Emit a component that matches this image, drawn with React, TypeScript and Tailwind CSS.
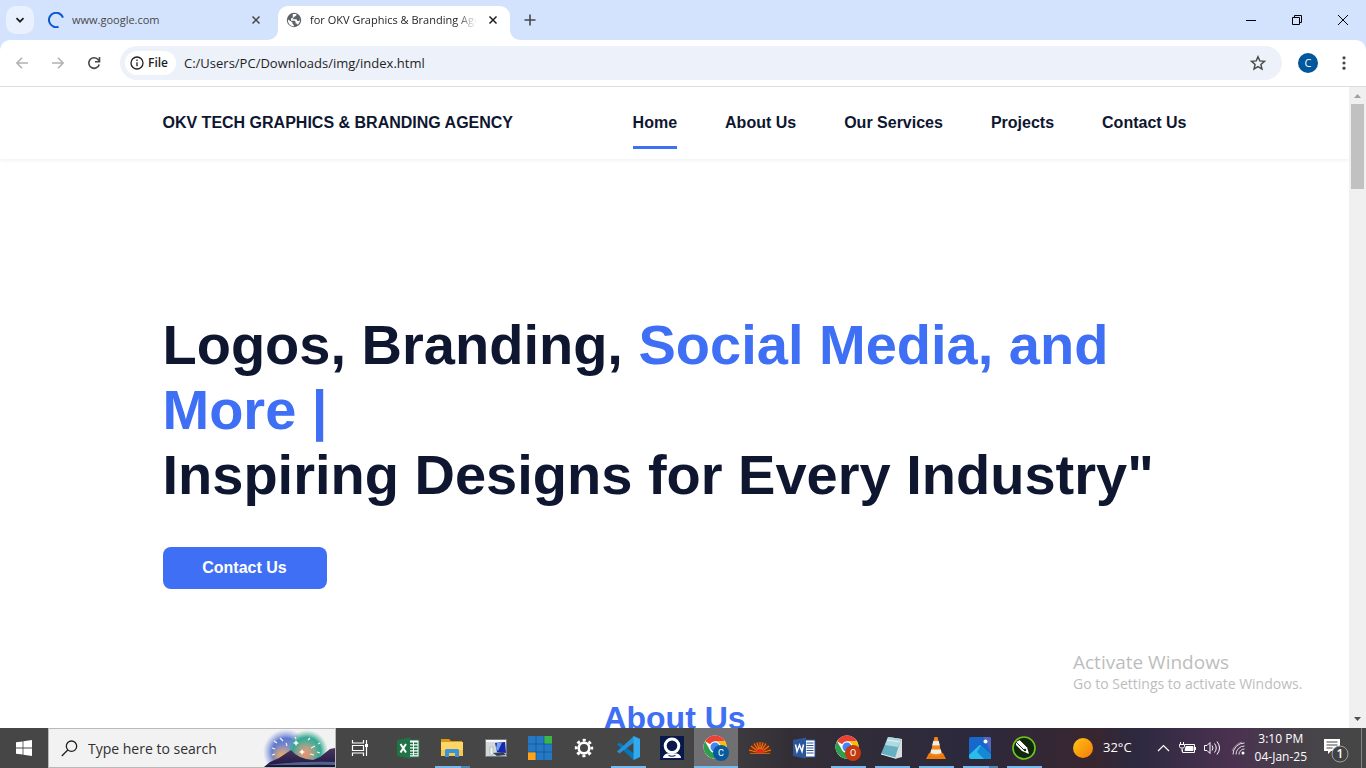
import type { ReactNode } from "react";

const ui = "font-['Open_Sans','Noto_Sans',sans-serif]";

function Cross({ className }: { className?: string }) {
  return (
    <svg viewBox="0 0 10 10" className={className} fill="none" stroke="currentColor">
      <path d="M1.500 1.500l7 7M8.500 1.500l-7 7" strokeWidth="1.500" />
    </svg>
  );
}

function TabStrip() {
  return (
    <div className={`flex h-10 shrink-0 items-stretch bg-[#d3e3fd] ${ui} text-[11px] text-[#474747]`}>
      <button
        aria-label="Search tabs"
        className="mt-1.5 ml-1.5 flex h-7 w-7 items-center justify-center rounded-[10px] bg-[#e9f1fe]"
      >
        <svg viewBox="0 0 10 10" className="h-2.5 w-2.5" fill="none" stroke="#1f1f1f" strokeWidth="1.800">
          <path d="M1.500 3.200L5 6.700l3.500-3.500" />
        </svg>
      </button>
      <div className="flex w-[240px] items-center pl-3.5">
        <svg viewBox="0 0 16 16" className="h-4 w-4" fill="none" stroke="#0b57d0" strokeWidth="2">
          <path d="M15 5.600A7.200 7.200 0 1 0 10.500 14.800" />
        </svg>
        <span className="ml-2 flex-1 pt-px">www.google.com</span>
        <button aria-label="Close www.google.com" className="mr-2.5 flex h-4 w-4 items-center justify-center">
          <Cross className="h-2.5 w-2.5" />
        </button>
      </div>
      <svg viewBox="0 0 10 10" className="-ml-1.5 h-2.5 w-2.5 self-end" fill="#fff">
        <path d="M10 0v10H0A10 10 0 0 0 10 0z" />
      </svg>
      <div className="mt-1.5 flex w-[232px] items-center rounded-t-[10px] bg-white pb-1.5 pl-2 text-[#1f1f1f]">
        <svg viewBox="0 0 16 16" className="h-4 w-4">
          <circle cx="8" cy="8" r="7.200" fill="#5f6368" />
          <path
            d="M2 7.500l4.500 3v1.200l1.300 1.200v1.600A6 6 0 0 1 2 7.500zM6.800 1.900h3.600v1.400L9 4.600 7.500 5v1.300L6 7.300h4.500l1 1.600h1.700l.8-1.600c.3 2.500-1 4.500-2.500 5.500l-.7-1.300H9.600V9.700L8.600 8.700H5V6.400l1.800-.6z"
            fill="#fff"
          />
        </svg>
        <span className="ml-2 w-[167px] overflow-hidden pt-px whitespace-nowrap [mask-image:linear-gradient(to_right,black_145px,transparent)]">
          for OKV Graphics &amp; Branding Agency
        </span>
        <button aria-label="Close current tab" className="ml-2 flex h-4 w-4 items-center justify-center">
          <Cross className="h-2.5 w-2.5" />
        </button>
      </div>
      <svg viewBox="0 0 10 10" className="h-2.5 w-2.5 self-end" fill="#fff">
        <path d="M0 0v10h10A10 10 0 0 1 0 0z" />
      </svg>
      <button aria-label="New tab" className="flex w-5 items-center justify-center">
        <svg viewBox="0 0 12 12" className="h-3 w-3" fill="none" stroke="currentColor" strokeWidth="1.600">
          <path d="M6 .5v11M.5 6h11" />
        </svg>
      </button>
      <div className="flex-1" />
      <button aria-label="Minimize" className="flex w-[46px] items-center justify-center">
        <svg viewBox="0 0 10 10" className="h-2.5 w-2.5" stroke="#000">
          <path d="M0 5.500h10" />
        </svg>
      </button>
      <button aria-label="Restore" className="flex w-[46px] items-center justify-center">
        <svg viewBox="0 0 10 10" className="h-2.5 w-2.5" fill="none" stroke="#000">
          <path d="M.5 2.500h7v7h-7zM2.500 2.500v-2h7v7h-2" />
        </svg>
      </button>
      <button aria-label="Close" className="flex w-[46px] items-center justify-center">
        <svg viewBox="0 0 10 10" className="h-2.5 w-2.5" stroke="#000">
          <path d="M0 0l10 10M10 0L0 10" />
        </svg>
      </button>
    </div>
  );
}

function Toolbar() {
  return (
    <div className="shrink-0 bg-[#d3e3fd]">
      <div
        className={`flex h-[47px] items-center rounded-t-[10px] border-b border-[#dcdfe2] bg-white ${ui} text-[13px] text-[#1f1f1f]`}
      >
        <button aria-label="Back" className="ml-3.5 flex h-4 w-4 items-center justify-center text-[#b0b1b3]">
          <svg viewBox="0 0 12 12" className="h-3 w-3" fill="none" stroke="currentColor" strokeWidth="1.500">
            <path d="M12 6H1M6 .8L.9 6 6 11.200" />
          </svg>
        </button>
        <button aria-label="Forward" className="ml-5 flex h-4 w-4 items-center justify-center text-[#b0b1b3]">
          <svg viewBox="0 0 12 12" className="h-3 w-3" fill="none" stroke="currentColor" strokeWidth="1.500">
            <path d="M0 6h11M6 .8L11.100 6 6 11.200" />
          </svg>
        </button>
        <button aria-label="Reload" className="ml-5 flex h-4 w-4 items-center justify-center text-[#474747]">
          <svg viewBox="0 0 14 14" className="h-3.5 w-3.5" fill="none" stroke="currentColor" strokeWidth="1.600">
            <path d="M12.200 8.500A5.300 5.300 0 1 1 10.800 3.200L12.500 5" />
            <path d="M12.500 1v4.700H8" />
          </svg>
        </button>
        <div className="ml-[18px] flex h-[34px] flex-1 items-center rounded-full bg-[#edf1fa] pr-4 pl-[5px]">
          <button className="flex h-6 w-[51px] items-center rounded-full bg-white pl-[5px] text-xs font-semibold">
            <svg viewBox="0 0 14 14" className="mr-1 h-3.5 w-3.5" fill="none" stroke="currentColor" strokeWidth="1.300">
              <circle cx="7" cy="7" r="6" />
              <path d="M7 6.200v4M7 3.600v1.400" />
            </svg>
            File
          </button>
          <input
            aria-label="Address"
            defaultValue="C:/Users/PC/Downloads/img/index.html"
            className="ml-2 min-w-0 flex-1 bg-transparent pt-px outline-none"
          />
          <button aria-label="Bookmark this tab">
            <svg viewBox="0 0 16 16" className="h-4 w-4" fill="none" stroke="#474747" strokeWidth="1.400">
              <path d="M8 1.700l1.800 4.200 4.700.4-3.600 3.100 1.100 4.600L8 11.600 4 14l1.100-4.600L1.500 6.300l4.700-.4z" />
            </svg>
          </button>
        </div>
        <button
          aria-label="Profile C"
          className="ml-4 h-5 w-5 rounded-full bg-[#01579b] text-center text-[11px] leading-5 text-white"
        >
          C
        </button>
        <button aria-label="Menu" className="mr-[14px] ml-[18px] flex h-4 w-4 items-center justify-center">
          <svg viewBox="0 0 4 14" className="h-3.5 w-1" fill="#474747">
            <circle cx="2" cy="1.800" r="1.600" />
            <circle cx="2" cy="7" r="1.600" />
            <circle cx="2" cy="12.200" r="1.600" />
          </svg>
        </button>
      </div>
    </div>
  );
}

const links = ["Home", "About Us", "Our Services", "Projects", "Contact Us"];

function Site() {
  return (
    <div className="flex min-h-0 flex-1 bg-white">
      <main className="relative min-w-0 flex-1 overflow-hidden font-['Liberation_Sans',Arial,sans-serif] font-bold text-[#0e1630]">
        <header className="h-[72px] shadow-[0_1px_4px_rgba(20,26,45,0.08)]">
          <div className="mx-auto flex h-full w-[1024px] max-w-full items-center justify-between">
            <a href="#home">OKV TECH GRAPHICS &amp; BRANDING AGENCY</a>
            <nav className="flex h-full gap-12">
              {links.map((label, i) => (
                <a key={label} href="#" className="flex h-full flex-col">
                  <span className="flex h-[59px] items-end pb-[11px]">{label}</span>
                  {i === 0 && <span className="h-[3px] bg-[#3e6ff4]" />}
                </a>
              ))}
            </nav>
          </div>
        </header>
        <section className="mx-auto w-[1024px] max-w-full pt-[153px]">
          <h1 className="text-[56px] leading-[65px]">
            Logos, Branding, <span className="text-[#3e6ff4]">Social Media, and More |</span>
            <br />
            Inspiring Designs for Every Industry"
          </h1>
          <button className="mt-10 h-[42px] w-[164px] rounded-lg bg-[#3e6ff4] text-white">Contact Us</button>
        </section>
        <h2 className="mt-[111px] text-center text-[32px] leading-[37px] text-[#3e6ff4]">About Us</h2>
        <div className={`absolute right-10 bottom-[34px] w-[236px] ${ui} font-normal text-[#bdbdbd]`}>
          <p className="text-[19px] leading-6">Activate Windows</p>
          <p className="text-sm leading-5">Go to Settings to activate Windows.</p>
        </div>
      </main>
      <div className="flex w-[17px] flex-col items-center bg-[#f0f0f0]">
        <svg viewBox="0 0 17 17" className="h-[17px] w-[17px]" fill="#a0a0a0">
          <path d="M5 11h7L8.500 7z" />
        </svg>
        <div className="h-[85px] w-[13px] bg-[#c1c1c1]" />
        <div className="flex-1" />
        <svg viewBox="0 0 17 17" className="h-[17px] w-[17px]" fill="#505050">
          <path d="M5 6h7l-3.500 4z" />
        </svg>
      </div>
    </div>
  );
}

function Chrome({ letter, badge }: { letter: string; badge: string }) {
  return (
    <svg viewBox="0 0 26 26" className="h-[26px] w-[26px]">
      <circle cx="12" cy="12" r="11.500" fill="#fff" />
      <path d="M12 12L2 6.300A11.500 11.500 0 0 1 22 6.300H12z" fill="#ea4335" />
      <path d="M12 6.300h10A11.500 11.500 0 0 1 12 23.500l5-8.600z" fill="#fbbc04" />
      <path d="M2 6.300l5 8.600a5.700 5.700 0 0 0 7.800 2.200L12 23.500A11.500 11.500 0 0 1 2 6.300z" fill="#2f9e4b" />
      <circle cx="12" cy="12" r="5.700" fill="#fff" />
      <circle cx="12" cy="12" r="4.500" fill="#4285f4" />
      <circle cx="18" cy="18" r="8" fill={badge} />
      <text x="18" y="21" textAnchor="middle" fontSize="9" fill="#fff" fontFamily="Roboto, sans-serif">
        {letter}
      </text>
    </svg>
  );
}

const icon = "h-6 w-6";

const apps: { name: string; art: ReactNode; line?: string; more?: boolean; active?: boolean }[] = [
  {
    name: "Excel",
    art: (
      <svg viewBox="0 0 24 24" className={icon}>
        <path d="M12 4h11v17H12z" fill="#fff" stroke="#1f7446" />
        <path d="M14 6.500h3v1.800h-3zm4 0h3.500v1.800H18zM14 9.500h3v1.800h-3zm4 0h3.500v1.800H18zm-4 3h3v1.800h-3zm4 0h3.500v1.800H18zm-4 3h3v1.800h-3zm4 0h3.500v1.800H18zM14 18.300h3v1h-3zm4 0h3.500v1H18z" fill="#1f7446" />
        <path d="M1 4l13-2.500v21L1 20z" fill="#1f7446" />
        <path d="M4.500 8l5.500 8.500M10 8l-5.500 8.500" stroke="#fff" strokeWidth="2" />
      </svg>
    ),
  },
  {
    name: "File Explorer",
    line: "w-[26px]",
    more: true,
    art: (
      <svg viewBox="0 0 24 24" className={icon}>
        <path d="M1 3h8l2 2h11v6H1z" fill="#d99b13" />
        <path d="M1 6h22v14H1z" fill="#ffd666" />
        <path d="M1 14h22v6H1z" fill="#f8c74b" />
        <path d="M5 21v-7l1-1h12l1 1v7h-4v-4H9v4z" fill="#3a94dc" />
      </svg>
    ),
  },
  {
    name: "Remote PC",
    art: (
      <svg viewBox="0 0 24 24" className={icon}>
        <path d="M1.500 3.500h21v17h-21z" fill="#d5d8d9" stroke="#777b80" />
        <path d="M2 4h20v2H2z" fill="#f8f9fa" />
        <path d="M6 11h3v8H6z" fill="#e9f5e6" stroke="#8d9aa5" strokeWidth=".5" />
        <path d="M11 7l10-1 1 11-9-1z" fill="#1428b0" />
        <path d="M13 7l5-.5L14 15l-2-2z" fill="#7ba3ec" />
        <path d="M9 17l10-1 3 3-9 1z" fill="#333e5e" />
      </svg>
    ),
  },
  {
    name: "Tiles",
    art: (
      <svg viewBox="0 0 24 24" className={icon}>
        <path d="M0 0h24v24H0z" fill="#2478c4" />
        <path d="M16 0h8v8h-8z" fill="#3db54a" />
        <path d="M0 16h8v8H0z" fill="#ffa31a" />
        <path d="M8 0v24M16 0v24M0 8h24M0 16h24" stroke="#17548c" strokeWidth=".7" />
      </svg>
    ),
  },
  {
    name: "Settings",
    art: (
      <svg viewBox="0 0 24 24" className={icon} fill="none" stroke="#fff">
        <circle cx="12" cy="12" r="5.300" strokeWidth="2.600" />
        <circle cx="12" cy="12" r="7.800" strokeWidth="2.800" strokeDasharray="3.060 3.060" strokeDashoffset="1.530" />
      </svg>
    ),
  },
  {
    name: "Visual Studio Code",
    line: "w-[35px]",
    art: (
      <svg viewBox="0 0 24 24" className={icon}>
        <path d="M17.500 0L24 3v18l-6.500 3L1 8.500 3.500 6.500 18 17.500z" fill="#0877ba" />
        <path d="M17.500 24L1 15.500l2.500 2L18 6.500V0L1 15.500z" fill="#2392d8" />
        <path d="M17.500 0L24 3v18l-6.500 3z" fill="#33a9ee" />
      </svg>
    ),
  },
  {
    name: "Assistant",
    art: (
      <svg viewBox="0 0 24 24" className={icon}>
        <path d="M0 0h24v24H0z" fill="#07194a" />
        <circle cx="12" cy="9.800" r="6.800" fill="none" stroke="#fff" strokeWidth="3" />
        <path d="M3 22q0-3 4-4.500h10q4 1.500 4 4.500z" fill="#fff" />
        <path d="M8.500 19.500q3.500 1.500 7 0" stroke="#07194a" strokeWidth="1.200" fill="none" />
      </svg>
    ),
  },
  { name: "Chrome C", line: "w-full", active: true, art: <Chrome letter="C" badge="#075a9e" /> },
  {
    name: "Fan",
    art: (
      <svg viewBox="0 0 24 24" className={icon}>
        <path d="M1 17A11 11 0 0 1 23 17z" fill="#7a2d0c" />
        <path d="M12 17L1 14M12 17L3 10M12 17L6 7.500M12 17L9 6.500M12 17V6M12 17l3-10.500M12 17l6-9.500M12 17l9-7M12 17l11-3" stroke="#f07818" strokeWidth="1.100" />
        <path d="M8 17a4 4 0 0 1 8 0z" fill="#ed2619" />
        <path d="M2 17.500h20" stroke="#aa6d13" />
      </svg>
    ),
  },
  {
    name: "Word",
    art: (
      <svg viewBox="0 0 24 24" className={icon}>
        <path d="M12 4h11v17H12z" fill="#fff" stroke="#2b579a" />
        <path d="M14.500 7h7m-7 2.500h7m-7 2.500h7m-7 2.500h7m-7 2.500h7" stroke="#2b579a" />
        <path d="M1 4l13-2.500v21L1 20z" fill="#2b579a" />
        <path d="M3.500 8.500l1.500 7 2.500-6.500L10 15.500l1.500-7" fill="none" stroke="#fff" strokeWidth="1.500" />
      </svg>
    ),
  },
  { name: "Chrome O", line: "w-[35px]", art: <Chrome letter="O" badge="#c5390f" /> },
  {
    name: "Notepad",
    line: "w-[35px]",
    art: (
      <svg viewBox="0 0 24 24" className={icon}>
        <path d="M8 1l14 2v18l-7 2z" fill="#d6dede" />
        <path d="M8 1l13 2-6 19L1 18z" fill="#68afc0" />
        <path d="M8 1l13 2-3 8-13-2z" fill="#afdae2" />
        <path d="M7 4l13 2M1 18l14 4" stroke="#def7fa" />
      </svg>
    ),
  },
  {
    name: "VLC",
    line: "w-[35px]",
    art: (
      <svg viewBox="0 0 24 24" className={icon}>
        <path d="M5 17h14l3 6H2z" fill="#ed790b" />
        <path d="M10.500 1h3l4.500 18c-3 1.500-9 1.500-12 0z" fill="#f58612" />
        <path d="M9.300 5h5.400l1.200 4.500H8.100zM7.200 13.500h9.600l.9 3.500c-3 1.500-8.400 1.500-11.400 0z" fill="#ececea" />
      </svg>
    ),
  },
  {
    name: "Photos",
    line: "w-[26px]",
    more: true,
    art: (
      <svg viewBox="0 0 24 24" className={icon}>
        <rect x="1" y="1" width="22" height="22" rx="2" fill="#1767cc" />
        <path d="M15 1h6a2 2 0 0 1 2 2v13z" fill="#5267bd" />
        <path d="M1 19L11 9.500q1-1 2 0L23 19v2q0 2-2 2H3q-2 0-2-2z" fill="#2cbceb" />
        <path d="M13 9.500L23 19v2q0 2-2 2h-5l-7-7z" fill="#1689d5" />
        <circle cx="17.500" cy="5.500" r="2" fill="#fff" />
      </svg>
    ),
  },
  {
    name: "CorelDRAW",
    line: "w-[35px]",
    art: (
      <svg viewBox="0 0 24 24" className={icon}>
        <circle cx="12" cy="12" r="11" fill="#10290d" stroke="#75c51c" strokeWidth="1.600" />
        <path d="M4 6l4-2 7 7 2 7-7-3-6-6z" fill="#fff" />
        <path d="M4 6l8 8M8 4l7 7" stroke="#263b23" />
        <circle cx="13" cy="14" r="1.200" fill="#10290d" />
      </svg>
    ),
  },
];

function HighlightArt() {
  return (
    <svg viewBox="0 0 72 38" className="h-[38px] w-[72px]">
      <defs>
        <radialGradient id="dusk">
          <stop offset="0" stopColor="#8a8fd0" />
          <stop offset=".6" stopColor="#5f79d2" />
          <stop offset="1" stopColor="#8d9ce0" stopOpacity="0" />
        </radialGradient>
        <radialGradient id="aurora">
          <stop offset="0" stopColor="#8fb59c" />
          <stop offset=".65" stopColor="#37a996" />
          <stop offset="1" stopColor="#60bd9e" stopOpacity="0" />
        </radialGradient>
        <radialGradient id="glow">
          <stop offset="0" stopColor="#f0b060" />
          <stop offset="1" stopColor="#f0b060" stopOpacity="0" />
        </radialGradient>
        <radialGradient id="ember">
          <stop offset="0" stopColor="#f08f70" />
          <stop offset="1" stopColor="#f08f70" stopOpacity="0" />
        </radialGradient>
        <linearGradient id="slope" x1="0" y1="0" x2="0" y2="1">
          <stop offset="0" stopColor="#4a3560" />
          <stop offset="1" stopColor="#1d1840" />
        </linearGradient>
      </defs>
      <circle cx="23" cy="23" r="23" fill="url(#dusk)" />
      <circle cx="44" cy="22" r="21" fill="url(#aurora)" />
      <circle cx="19" cy="27" r="12" fill="url(#glow)" />
      <circle cx="42" cy="25" r="13" fill="url(#ember)" />
      <path d="M1 38l6-5 9-4 6-4 6-4 4 4 5 3 6 2 7 1 7-3 5-4 5-4 5-1v19z" fill="url(#slope)" />
      <path d="M3 36q34-4 69-3v3z" fill="#51618e" />
      <path d="M1 38q36-3 71-2v2z" fill="#171634" />
      <path d="M12 20l-3-1M14 14l-3-2M20 12l-3-3M24 17l-1-3M33 10l-1-2M45 11l2-2M48 19l4-2M47 25l4 1M55 15l2-1M54 23l3 1M9 26l3-1" stroke="#fff4db" strokeWidth="1.200" />
      <path d="M33 11l1 2 2 1-2 1-1 2-1-2-2-1 2-1zM39 20l1 2 2 1-2 1-1 2-1-2-2-1 2-1z" fill="#fff" />
    </svg>
  );
}

function Taskbar() {
  return (
    <div
      className={`flex h-10 shrink-0 items-stretch bg-[linear-gradient(90deg,#464646_0%,#464646_50%,#332e36_58%,#2c293d_71%,#38262f_80%,#2c293f_83%,#4a3150_90%,#464448_96%,#464646_100%)] ${ui} text-xs text-white`}
    >
      <button aria-label="Start" className="flex w-12 items-center justify-center">
        <svg viewBox="0 0 16 16" className="h-4 w-4" fill="#fff">
          <path d="M0 2.300L6.600 1.400v6.200H0zM7.400 1.300L16 0v7.600H7.400zM0 8.400h6.600v6.200L0 13.700zM7.400 8.400H16V16l-8.600-1.300z" />
        </svg>
      </button>
      <div className="flex w-72 items-center border border-[#b9b9b9] bg-[#f2f2f2] pl-3 text-[#303030]">
        <svg viewBox="0 0 17 17" className="h-[17px] w-[17px] shrink-0" fill="none" stroke="#222" strokeWidth="1.300">
          <circle cx="10.500" cy="6.200" r="5.200" />
          <path d="M6.800 10L.8 16" />
        </svg>
        <input
          aria-label="Search"
          placeholder="Type here to search"
          className="ml-2.5 min-w-0 flex-1 bg-transparent pt-px text-sm outline-none placeholder:text-[#303030]"
        />
        <HighlightArt />
      </div>
      <button aria-label="Task View" className="mr-0.5 flex w-12 items-center justify-center">
        <svg viewBox="0 0 18 18" className="h-[18px] w-[18px]" fill="none" stroke="#fff" strokeWidth="1.200">
          <path d="M1.500 1v3h11V1M1.500 17v-3h11v3M1.500 6.500h11v5h-11zM15.500 1v16" />
          <path d="M14 5h3v3h-3z" fill="#fff" stroke="none" />
        </svg>
      </button>
      {apps.map((app) => (
        <button
          key={app.name}
          aria-label={app.name}
          className={`flex w-11 flex-col items-center ${app.active ? "bg-[#707073]" : ""}`}
        >
          <span className="flex h-[38px] items-center justify-center pt-0.5">{app.art}</span>
          <span className="flex h-0.5 w-full justify-center">
            {app.line && <span className={`h-0.5 bg-[#76b9ed] ${app.line}`} />}
            {app.more && <span className="h-0.5 w-[9px] bg-[#5285ac]" />}
          </span>
        </button>
      ))}
      <div className="flex-1" />
      <button className="flex items-center gap-2.5 text-[13px]">
        <svg viewBox="0 0 20 20" className="h-5 w-5">
          <defs>
            <linearGradient id="sun" x1="0" y1="0" x2="1" y2="1">
              <stop offset="0" stopColor="#ffc414" />
              <stop offset="1" stopColor="#f47b08" />
            </linearGradient>
          </defs>
          <circle cx="10" cy="10" r="10" fill="url(#sun)" />
        </svg>
        32°C
      </button>
      <div className="ml-[25px] flex items-center gap-2">
        <svg viewBox="0 0 13 8" className="h-2 w-[13px]" fill="none" stroke="#fff" strokeWidth="1.200">
          <path d="M1 7l5.500-5.500L12 7" />
        </svg>
        <svg viewBox="0 0 17 13" className="ml-px h-[13px] w-[17px]" fill="none" stroke="#fff">
          <path d="M6 2.500h9.500v8H3.500V7.500M16.500 5v3M1.500 0v2M4.500 0v2M.5 2.500h5v2l-1 1.500h-3L.5 4.500zM3 6.500v3" />
          <path d="M7 4.500h7v4H6z" fill="#fff" />
        </svg>
        <svg viewBox="0 0 17 14" className="h-3.5 w-[17px]" fill="none" stroke="#fff">
          <path d="M.5 4.500H3l3-3v11l-3-3H.5zM8 4.500q2 2.500 0 5M10.500 2.500q3.500 4.500 0 9M13 .5q5 6.500 0 13" />
        </svg>
        <svg viewBox="0 0 14 14" className="ml-0.5 h-3.5 w-3.5" fill="none" stroke="#e6dfe8">
          <path d="M2 13.500A11.500 11.500 0 0 1 13.500 2M5 13.500A8.500 8.500 0 0 1 13.500 5M8 13.500A5.500 5.500 0 0 1 13.500 8" />
          <path d="M1 10Q4 3 11 1" opacity=".5" />
          <circle cx="12" cy="12" r="1.500" fill="#fff" stroke="none" />
        </svg>
      </div>
      <button className="ml-2.5 text-center leading-[18px]">
        <span className="block">3:10 PM</span>
        <span className="block">04-Jan-25</span>
      </button>
      <button aria-label="Notifications, 1 new" className="ml-4 flex w-[30px] items-center">
        <svg viewBox="0 0 26 26" className="mt-1 h-[26px] w-[26px]">
          <path d="M1 2h16v12H8l-3 3v-3H1z" fill="#fff" />
          <path d="M3.500 5h11m-11 3h11m-11 3h6" stroke="#464646" />
          <circle cx="17" cy="17" r="8" fill="#424242" stroke="#a0a0a0" />
          <text x="17" y="21" textAnchor="middle" fontSize="12" fontWeight="600" fill="#fff">1</text>
        </svg>
      </button>
      <div className="ml-2 w-[5px] border-l border-[#858585]" />
    </div>
  );
}

export default function App() {
  return (
    <div className="flex h-screen flex-col overflow-hidden">
      <TabStrip />
      <Toolbar />
      <Site />
      <Taskbar />
    </div>
  );
}
